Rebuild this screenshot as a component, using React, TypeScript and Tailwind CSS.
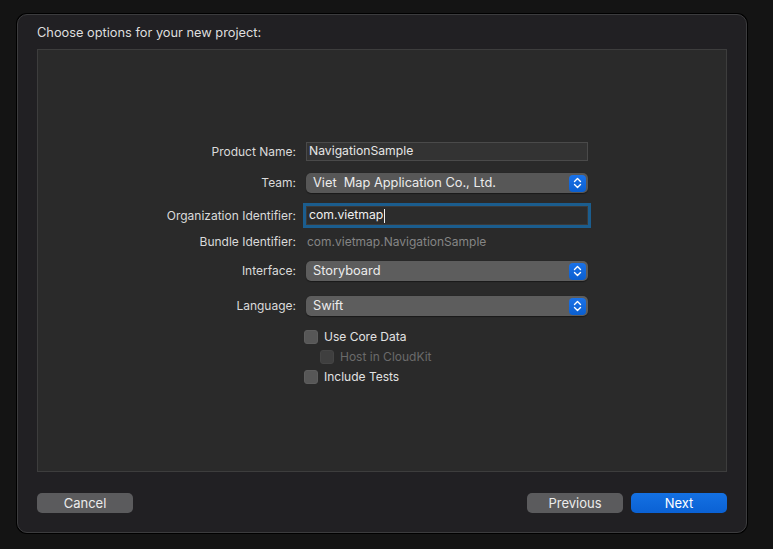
import React from "react";

const font = { fontFamily: "Inter, 'Noto Sans', sans-serif" };

function Stepper() {
  return (
    <div className="w-[17px] h-[17px] rounded-[4px] bg-gradient-to-b from-[#1a72e8] to-[#0a5fd0] flex items-center justify-center">
      <svg width="9" height="12" viewBox="0 0 9 12" fill="none" stroke="white" strokeWidth="1.4" strokeLinecap="round" strokeLinejoin="round">
        <path d="M1.5 4.5 L4.5 1.5 L7.5 4.5" />
        <path d="M1.5 7.5 L4.5 10.5 L7.5 7.5" />
      </svg>
    </div>
  );
}

function Label({ children }: { children: React.ReactNode }) {
  return <div className="w-[258px] text-right text-[12px] text-[#dadada] leading-none">{children}</div>;
}

function Popup({ value, dark }: { value: string; dark?: boolean }) {
  return (
    <div className={`ml-[10px] w-[282px] h-[20px] rounded-[5px] ${dark ? "bg-[#575757]" : "bg-[#5d5d5d]"} shadow-[0_0.5px_1px_rgba(0,0,0,0.4)] flex items-center justify-between pl-[7px] pr-[2px]`}>
      <span className="text-[12.8px] text-[#ececec] leading-none">{value}</span>
      <Stepper />
    </div>
  );
}

function Checkbox({ label, disabled, indent }: { label: string; disabled?: boolean; indent?: boolean }) {
  return (
    <div className={`flex items-center h-[14px] ${indent ? "ml-[282px]" : "ml-[266px]"}`}>
      <div className={`w-[14px] h-[14px] rounded-[3px] ${disabled ? "bg-[#3f3f3f] border border-[#454545]" : "bg-[#575757] border border-[#5e5e5e]"}`} />
      <span className={`ml-[6px] text-[12px] leading-none ${disabled ? "text-[#6a6a6a]" : "text-[#e2e2e2]"}`}>{label}</span>
    </div>
  );
}

export default function App() {
  return (
    <div className="w-[773px] h-[549px] bg-[#141414] pt-[14px] pl-[17px]" style={font}>
      <div className="w-[730px] h-[519px] rounded-[10px] bg-[#212023] border border-[#3c3c3e] shadow-[0_0_0_1px_#000] flex flex-col px-[19px]">
        <div className="pt-[10px] h-[34px] text-[12.8px] text-[#dedede] leading-[16px]">Choose options for your new project:</div>
        <div className="w-[690px] h-[423px] bg-[#2a2a2a] border border-[#3d3d3d] flex flex-col">
          <div className="flex items-center h-[19px] mt-[92px]">
            <Label>Product Name:</Label>
            <div className="ml-[10px] w-[282px] h-[19px] bg-[#333333] border border-[#4a4a4a] flex items-center pl-[2px]">
              <span className="text-[12.2px] text-[#e6e6e6] leading-none">NavigationSample</span>
            </div>
          </div>
          <div className="flex items-center mt-[12px]">
            <Label>Team:</Label>
            <Popup value={"Viet\u00a0 Map Application Co., Ltd."} dark />
          </div>
          <div className="flex items-center h-[19px] mt-[13px]">
            <Label>Organization Identifier:</Label>
            <div className="ml-[10px] w-[282px] h-[19px] bg-[#2c2c2c] border border-[#3a3a3a] shadow-[0_0_0_3px_#1b5d8e] flex items-center pl-[2px]">
              <span className="text-[12.2px] text-[#f0f0f0] leading-none">com.vietmap</span>
              <span className="w-[1px] h-[14px] bg-[#f0f0f0] ml-[1px]" />
            </div>
          </div>
          <div className="flex items-center h-[18px] mt-[8px]">
            <Label>Bundle Identifier:</Label>
            <div className="ml-[11px] text-[12px] text-[#858585] leading-none">com.vietmap.NavigationSample</div>
          </div>
          <div className="flex items-center mt-[10px]">
            <Label>Interface:</Label>
            <Popup value="Storyboard" />
          </div>
          <div className="flex items-center mt-[15px]">
            <Label>Language:</Label>
            <Popup value="Swift" />
          </div>
          <div className="mt-[14px] flex flex-col gap-[6px]">
            <Checkbox label="Use Core Data" />
            <Checkbox label="Host in CloudKit" disabled indent />
            <Checkbox label="Include Tests" />
          </div>
        </div>
        <div className="flex items-center justify-between mt-[21px]">
          <button className="w-[96px] h-[20px] rounded-[5px] bg-[#5b5b5d] text-[13px] text-[#ececec] leading-none">Cancel</button>
          <div className="flex gap-[8px]">
            <button className="w-[96px] h-[20px] rounded-[5px] bg-[#5b5b5d] text-[13px] text-[#ececec] leading-none">Previous</button>
            <button className="w-[96px] h-[20px] rounded-[5px] bg-gradient-to-b from-[#1471e3] to-[#0a61d4] text-[13px] text-white leading-none">Next</button>
          </div>
        </div>
      </div>
    </div>
  );
}
